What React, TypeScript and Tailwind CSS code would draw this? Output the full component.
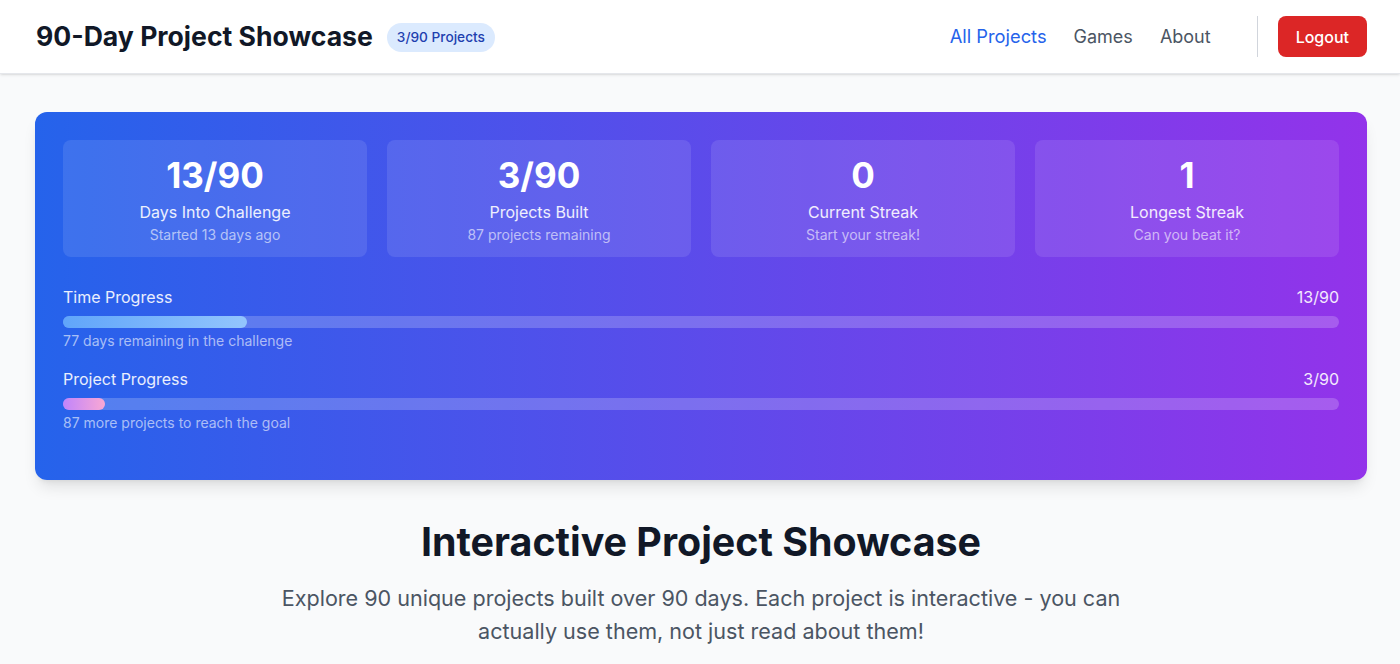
import React from "react";

const stats = [
  { value: "13/90", label: "Days Into Challenge", sub: "Started 13 days ago" },
  { value: "3/90", label: "Projects Built", sub: "87 projects remaining" },
  { value: "0", label: "Current Streak", sub: "Start your streak!" },
  { value: "1", label: "Longest Streak", sub: "Can you beat it?" },
];

const ProgressRow = ({ title, count, pct, note, fill }) => {
  return (
    <div>
      <div className="flex items-center justify-between text-base text-white/90">
        <span>{title}</span>
        <span>{count}</span>
      </div>
      <div className="mt-[7px] h-3 w-full rounded-full bg-white/20">
        <div className={`h-3 rounded-full ${fill}`} style={{ width: `${pct}%` }} />
      </div>
      <div className="mt-[3px] text-sm text-white/60">{note}</div>
    </div>
  );
};

export default function App() {
  return (
    <div
      className="min-h-screen bg-[#f9fafb]"
      style={{ fontFamily: "Inter, 'Noto Sans', sans-serif" }}
    >
      <header className="h-[74px] border-b border-gray-200 bg-white shadow-sm">
        <div className="flex h-full items-center justify-between pl-[36px] pr-[33px]">
          <div className="flex items-center gap-[14px]">
            <h1 className="text-[26.6px] font-bold text-[#111827]">90-Day Project Showcase</h1>
            <span className="mt-0.5 rounded-full bg-[#dbeafe] px-2.5 py-1 text-[13.7px] font-medium text-[#1e40af]">
              3/90 Projects
            </span>
          </div>
          <nav className="flex items-center">
            <a className="text-[18.3px] text-[#2563eb]">All Projects</a>
            <a className="ml-[27px] text-[18px] text-[#4b5563]">Games</a>
            <a className="ml-[27px] text-[18px] text-[#4b5563]">About</a>
            <div className="ml-[46px] h-[41px] w-px bg-gray-300" />
            <button className="ml-5 h-[41px] rounded-lg bg-[#dc2626] px-[18px] text-base font-medium text-white">
              Logout
            </button>
          </nav>
        </div>
      </header>

      <main className="pl-[35px] pr-[33px] pt-[38px]">
        <section className="rounded-xl bg-[linear-gradient(to_right,#2563eb,#9333ea)] px-7 pt-7 pb-[47px] shadow-lg">
          <div className="grid grid-cols-4 gap-5">
            {stats.map((s) => (
              <div key={s.label} className="flex h-[117px] flex-col items-center rounded-lg bg-white/10 pt-[15px] text-center">
                <div className="text-[35px] leading-10 font-bold text-white">{s.value}</div>
                <div className="mt-[5px] text-base text-white/90">{s.label}</div>
                <div className="mt-px text-sm text-white/60">{s.sub}</div>
              </div>
            ))}
          </div>
          <div className="mt-7 space-y-4">
            <ProgressRow
              title="Time Progress"
              count="13/90"
              pct={14.44}
              note="77 days remaining in the challenge"
              fill="bg-[linear-gradient(to_right,#60a5fa,#93c5fd)]"
            />
            <ProgressRow
              title="Project Progress"
              count="3/90"
              pct={3.33}
              note="87 more projects to reach the goal"
              fill="bg-[linear-gradient(to_right,#c084fc,#f9a8d4)]"
            />
          </div>
        </section>

        <div className="mx-auto mt-[38px] max-w-4xl text-center">
          <h2 className="text-[39.4px] leading-[48px] font-bold text-[#111827]">Interactive Project Showcase</h2>
          <p className="mt-4 text-[21.55px] leading-[33px] text-[#4b5563]">
            Explore 90 unique projects built over 90 days. Each project is interactive - you can actually use them, not just read about them!
          </p>
        </div>
      </main>
    </div>
  );
}
